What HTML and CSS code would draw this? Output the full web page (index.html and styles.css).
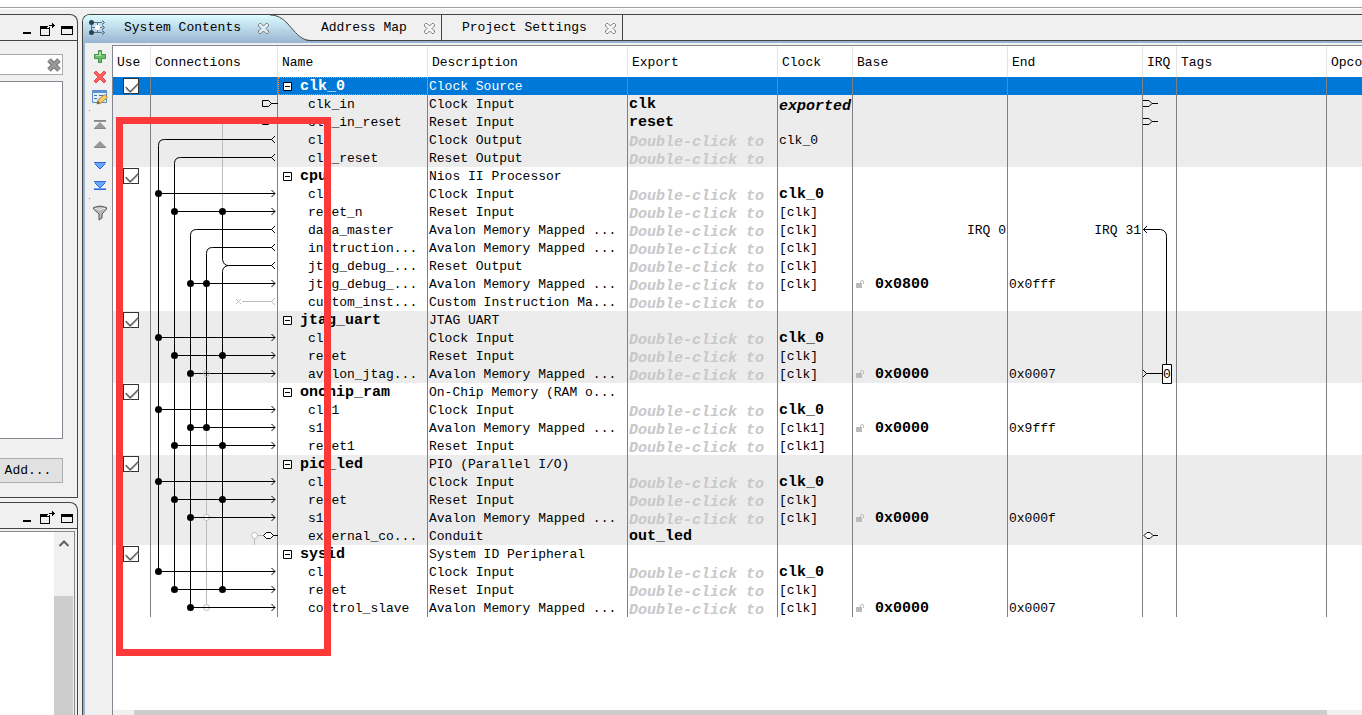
FILE: index.html
```
<!DOCTYPE html>
<html lang="en">
<head>
<meta charset="utf-8">
<title>System Contents</title>
<link rel="stylesheet" href="styles.css">
</head>
<body>
<svg class="defs" aria-hidden="true">
  <defs>
    <symbol id="win" viewBox="0 0 50 14">
      <path d="M0 9h8v2H0z"/>
      <path fill-rule="evenodd" d="M17 3h10v10H17zM18 6v6h8V6zM24 4h1V3h1V2h3V0h1v1h1v1h1v1h-1v1h-1v1h-1V3h-2v1h-1v1h-2z"/>
      <path fill-rule="evenodd" d="M38 3h12v9H38zM39 6v5h10V6z"/>
    </symbol>
    <symbol id="close" viewBox="0 0 11 11">
      <path d="M1.500 .5h1.500l2.500 2.500L8 .5h1.500l1 1V3L8 5.500 10.500 8v1.500l-1 1H8L5.500 8 3 10.500H1.500l-1-1V8L3 5.500.5 3V1.500z" fill="#fff" fill-opacity=".5" stroke="#777"/>
    </symbol>
    <symbol id="lock" viewBox="0 0 8 8">
      <path d="M0 3h6v5H0z" fill="#bbb"/><path d="M4.500 3V1.500q0-1 1.500-1t1.500 1V4" fill="none" stroke="#bbb"/>
    </symbol>
    <symbol id="minus" viewBox="0 0 9 9">
      <path d="M.5 .5h8v8h-8z" fill="#fff" stroke="#000"/><path d="M2 4.500h5" stroke="#000"/>
    </symbol>
    <g id="in"><path d="M271.500 -3.500l3.500 3.500-3.500 3.500"/></g>
    <g id="out"><path d="M275 -3.500l-3.500 3.500 3.500 3.500"/></g>
  </defs>
</svg>
<div class="topline"></div>
<div class="workspace">
  <aside class="side">
    <section class="pane">
      <header class="pane-head"><svg class="win"><use href="#win"/></svg></header>
      <div class="pane-body">
        <div class="search">
          <input type="text" aria-label="Search">
          <button class="clear" aria-label="Clear"><svg width="16" height="16" viewBox="0 0 16 16"><path d="M3 3l10 10M13 3L3 13" stroke="#777" stroke-width="5"/><path d="M3 3l10 10M13 3L3 13" stroke="#999" stroke-width="3"/></svg></button>
        </div>
        <div class="list"></div>
        <button class="add">Add...</button>
      </div>
    </section>
    <section class="pane pane-low">
      <header class="pane-head"><svg class="win"><use href="#win"/></svg></header>
      <div class="tree">
        <div class="vbar"><svg width="12" height="8" viewBox="0 0 12 8"><path d="M1.500 7L6 2.500 10.500 7" fill="none" stroke="#606060" stroke-width="2"/></svg><div class="vthumb"></div></div>
      </div>
    </section>
  </aside>
  <main class="editor">
    <nav class="tabs">
      <div class="tab active">
        <svg class="tab-bg" viewBox="0 0 228 28"><defs><linearGradient id="tabfill" x1="0" y1="0" x2="0" y2="1"><stop offset="0" stop-color="#dcfcff"/><stop offset="1" stop-color="#99b4d1"/></linearGradient></defs><path d="M0 28V7Q1 0 7 0H187C207 0 210 26 228 26V28z" fill="url(#tabfill)"/><path d="M187 0C207 0 210 25.500 228 25.500" fill="none" stroke="#444"/></svg>
        <svg class="tab-icon" width="17" height="16" viewBox="0 0 17 16"><path d="M3 2.500h10M3 7.500h10M3 12.500h10M2.500 3v10M8.500 3v10" stroke="#5a7386" fill="none"/><g fill="#2c4258"><circle cx="2.500" cy="2.500" r="2.500"/><circle cx="2.500" cy="12.500" r="2.500"/></g><path d="M13 .5l2.500 2-2.500 2M13 5.500l2.500 2-2.500 2M13 10.500l2.500 2-2.500 2" fill="none" stroke="#3b5166"/><circle cx="8.500" cy="7.500" r="2.500" fill="#fff"/></svg>
        <button class="tab-label">System Contents</button>
        <button class="x" aria-label="Close System Contents"><svg><use href="#close"/></svg></button>
      </div>
      <div class="tab second">
        <button class="tab-label">Address Map</button>
        <button class="x" aria-label="Close Address Map"><svg><use href="#close"/></svg></button>
      </div>
      <div class="tab third">
        <button class="tab-label">Project Settings</button>
        <button class="x" aria-label="Close Project Settings"><svg><use href="#close"/></svg></button>
      </div>
    </nav>
    <div class="content">
      <div class="tools">
        <button aria-label="Add"><svg viewBox="0 0 16 16"><path d="M6.500 1.500h3v4h4v4h-4v4h-3v-4h-4v-4h4z" fill="#6cc06c" stroke="#3c9146"/><path d="M7 3h2v4H4V6h3z" fill="#a9e6a4"/></svg></button>
        <button aria-label="Remove"><svg viewBox="0 0 16 16"><path d="M2 4l2-2 4 4 4-4 2 2-4 4 4 4-2 2-4-4-4 4-2-2 4-4z" fill="#ff6060" stroke="#e84a4a"/></svg></button>
        <button aria-label="Edit"><svg viewBox="0 0 16 16"><path d="M.5 1.500h14v12H.5z" fill="#e3f0fb" stroke="#5b8cc9"/><path d="M1 2h13v2H1z" fill="#5b93dc"/><path d="M2 6.500h3M2 9.500h3M7 6.500h5M7 9.500h2" stroke="#3f72b5"/><path d="M5 15l1-4 6.500-5.500 3 3L9 14z" fill="#f5ce69" stroke="#b5852c"/><path d="M5 15l1-3 2 2z" fill="#654"/></svg></button>
        <i class="sep"></i>
        <button aria-label="Move to top"><svg viewBox="0 0 16 16"><path d="M2 3h12v2H2zM8 5l6 6v1H2v-1z" fill="#999"/><path d="M2 3.500h12M2 11.500h12" stroke="#858585"/></svg></button>
        <button aria-label="Move up"><svg viewBox="0 0 16 16"><path d="M8 4l6 6v1H2v-1z" fill="#999"/><path d="M2 10.500h12" stroke="#858585"/></svg></button>
        <button aria-label="Move down"><svg viewBox="0 0 16 16"><path d="M2 5h12v1L8 12 2 6z" fill="#6aa5f8"/><path d="M2 5.500h12M3 7l5 5 5-5" stroke="#2a66d8" fill="none"/></svg></button>
        <button aria-label="Move to bottom"><svg viewBox="0 0 16 16"><path d="M2 4h12v1L8 11 2 5zM2 11h12v2H2z" fill="#6aa5f8"/><path d="M2 4.500h12M3 6l5 5 5-5M2 12.500h12" stroke="#2a66d8" fill="none"/></svg></button>
        <i class="sep"></i>
        <button aria-label="Filter"><svg viewBox="0 0 16 16"><path d="M1.500 2.500Q8-.5 14.500 2.500V4L10 9v4l-3 2V9L1.500 4z" fill="#bbb" stroke="#555"/><path d="M3 3.500q5 1.500 10 0" stroke="#eee" fill="none"/></svg></button>
      </div>
      <div class="grid">
        <table>
          <colgroup><col class="c-use"><col class="c-con"><col class="c-name"><col class="c-desc"><col class="c-exp"><col class="c-clk"><col class="c-base"><col class="c-end"><col class="c-irq"><col class="c-tags"><col class="c-op"></colgroup>
          <thead><tr><th>Use</th><th>Connections</th><th>Name</th><th>Description</th><th>Export</th><th>Clock</th><th>Base</th><th>End</th><th>IRQ</th><th>Tags</th><th>Opcode Name</th></tr></thead>
          <tbody class="selected">
            <tr><td class="use"><input type="checkbox" checked aria-label="Use clk_0"></td>
              <td class="wires"><svg width="127" height="540" viewBox="151 77 127 540" fill="none" stroke="#000">
                <g stroke="#bbb">
                  <path d="M222.500 121V211M206.500 427V607M242 301.500H272M236 299l5 5M241 299l-5 5M254.500 538V545M257 535.500H264"/>
                  <use href="#out" y="301.500"/>
                </g>
                <path d="M262.500 100.500h6l3 3-3 3h-6zM271 103.500h7M262.500 118.500h6l3 3-3 3h-6zM271 121.500h7"/>
                <path d="M272 139.500H164.500Q158.500 139.500 158.500 145.500V571M272 157.500H180.500Q174.500 157.500 174.500 163.500V589M272 229.500H196.500Q190.500 229.500 190.500 235.500V607M272 247.500H212.500Q206.500 247.500 206.500 253.500V427M222.500 211V259.500Q223.500 265.500 228.500 265.500H272M228.500 265.500Q222.500 266.500 222.500 271.500V589"/>
                <path d="M158 193.500H275M174 211.500H275M190 283.500H275M158 337.500H275M174 355.500H275M190 373.500H275M158 409.500H275M190 427.500H275M174 445.500H275M158 481.500H275M174 499.500H275M190 517.500H275M158 571.500H275M174 589.500H275M190 607.500H275"/>
                <g stroke="#bbb">
                  <circle cx="206.500" cy="373.500" r="3"/>
                  <circle cx="254.500" cy="535.500" r="3" fill="#fff"/><circle cx="206.500" cy="517.500" r="3" fill="#fff"/><circle cx="206.500" cy="607.500" r="3" fill="#fff"/>
                </g>
                <path d="M203 517.500h7M203 607.500h7"/>
                <use href="#out" y="139.500"/><use href="#out" y="157.500"/><use href="#out" y="229.500"/><use href="#out" y="247.500"/><use href="#out" y="265.500"/>
                <use href="#in" y="193.500"/><use href="#in" y="211.500"/><use href="#in" y="283.500"/><use href="#in" y="337.500"/><use href="#in" y="355.500"/><use href="#in" y="373.500"/><use href="#in" y="409.500"/><use href="#in" y="427.500"/><use href="#in" y="445.500"/><use href="#in" y="481.500"/><use href="#in" y="499.500"/><use href="#in" y="517.500"/><use href="#in" y="571.500"/><use href="#in" y="589.500"/><use href="#in" y="607.500"/>
                <path d="M263.500 535.500l3-3h4l3 3-3 3h-4z" fill="#fff"/><path d="M273 535.500h5"/>
                <g fill="#000" stroke="none">
                  <circle cx="158.500" cy="193.500" r="3.500"/><circle cx="158.500" cy="337.500" r="3.500"/><circle cx="158.500" cy="409.500" r="3.500"/><circle cx="158.500" cy="481.500" r="3.500"/><circle cx="158.500" cy="571.500" r="3.500"/>
                  <circle cx="174.500" cy="211.500" r="3.500"/><circle cx="174.500" cy="355.500" r="3.500"/><circle cx="174.500" cy="445.500" r="3.500"/><circle cx="174.500" cy="499.500" r="3.500"/><circle cx="174.500" cy="589.500" r="3.500"/>
                  <circle cx="222.500" cy="211.500" r="3.500"/><circle cx="222.500" cy="355.500" r="3.500"/><circle cx="222.500" cy="445.500" r="3.500"/><circle cx="222.500" cy="499.500" r="3.500"/><circle cx="222.500" cy="589.500" r="3.500"/>
                  <circle cx="190.500" cy="283.500" r="3.500"/><circle cx="190.500" cy="373.500" r="3.500"/><circle cx="190.500" cy="427.500" r="3.500"/><circle cx="190.500" cy="517.500" r="3.500"/><circle cx="190.500" cy="607.500" r="3.500"/>
                  <circle cx="206.500" cy="283.500" r="3.500"/><circle cx="206.500" cy="427.500" r="3.500"/>
                </g>
              </svg></td>
              <td class="mod focus"><svg><use href="#minus"/></svg>clk_0</td><td>Clock Source</td><td></td><td></td><td></td><td></td>
              <td class="wires"><svg width="34" height="540" viewBox="1143 77 34 540" fill="none" stroke="#000">
                <path d="M1143 100.500h6l3 3-3 3h-6M1152 103.500h6M1143 118.500h6l3 3-3 3h-6M1152 121.500h6"/>
                <path d="M1147 226l-3.500 3.500 3.500 3.500M1143 229.500H1160.500Q1166.500 230.500 1166.500 236.500V364M1143 370l3.500 3.500-3.500 3.500M1146 373.500H1162"/>
                <path d="M1162.500 364.500h9v19h-9z" fill="#fff"/>
                <text x="1163" y="378" class="irqno">0</text>
                <path d="M1144 535.500l3-3h3l3 3-3 3h-3z" fill="#fff"/><path d="M1153 535.500h5"/>
              </svg></td><td></td><td></td></tr>
          </tbody>
          <tbody class="shade">
            <tr><td></td><td></td><td class="port">clk_in</td><td>Clock Input</td><td class="strong">clk</td><td class="hint dark">exported</td><td></td><td></td><td></td><td></td><td></td></tr>
            <tr><td></td><td></td><td class="port">clk_in_reset</td><td>Reset Input</td><td class="strong">reset</td><td></td><td></td><td></td><td></td><td></td><td></td></tr>
            <tr><td></td><td></td><td class="port">clk</td><td>Clock Output</td><td class="hint">Double-click to</td><td>clk_0</td><td></td><td></td><td></td><td></td><td></td></tr>
            <tr><td></td><td></td><td class="port">clk_reset</td><td>Reset Output</td><td class="hint">Double-click to</td><td></td><td></td><td></td><td></td><td></td><td></td></tr>
          </tbody>
          <tbody>
            <tr><td class="use"><input type="checkbox" checked aria-label="Use cpu"></td><td></td><td class="mod"><svg><use href="#minus"/></svg>cpu</td><td>Nios II Processor</td><td></td><td></td><td></td><td></td><td></td><td></td><td></td></tr>
            <tr><td></td><td></td><td class="port">clk</td><td>Clock Input</td><td class="hint">Double-click to</td><td class="strong">clk_0</td><td></td><td></td><td></td><td></td><td></td></tr>
            <tr><td></td><td></td><td class="port">reset_n</td><td>Reset Input</td><td class="hint">Double-click to</td><td>[clk]</td><td></td><td></td><td></td><td></td><td></td></tr>
            <tr><td></td><td></td><td class="port">data_master</td><td>Avalon Memory Mapped ...</td><td class="hint">Double-click to</td><td>[clk]</td><td class="irq">IRQ 0</td><td class="irq">IRQ 31</td><td></td><td></td><td></td></tr>
            <tr><td></td><td></td><td class="port">instruction...</td><td>Avalon Memory Mapped ...</td><td class="hint">Double-click to</td><td>[clk]</td><td></td><td></td><td></td><td></td><td></td></tr>
            <tr><td></td><td></td><td class="port">jtag_debug_...</td><td>Reset Output</td><td class="hint">Double-click to</td><td>[clk]</td><td></td><td></td><td></td><td></td><td></td></tr>
            <tr><td></td><td></td><td class="port">jtag_debug_...</td><td>Avalon Memory Mapped ...</td><td class="hint">Double-click to</td><td>[clk]</td><td class="strong base"><svg><use href="#lock"/></svg>0x0800</td><td>0x0fff</td><td></td><td></td><td></td></tr>
            <tr><td></td><td></td><td class="port">custom_inst...</td><td>Custom Instruction Ma...</td><td class="hint">Double-click to</td><td></td><td></td><td></td><td></td><td></td><td></td></tr>
          </tbody>
          <tbody class="shade">
            <tr><td class="use"><input type="checkbox" checked aria-label="Use jtag_uart"></td><td></td><td class="mod"><svg><use href="#minus"/></svg>jtag_uart</td><td>JTAG UART</td><td></td><td></td><td></td><td></td><td></td><td></td><td></td></tr>
            <tr><td></td><td></td><td class="port">clk</td><td>Clock Input</td><td class="hint">Double-click to</td><td class="strong">clk_0</td><td></td><td></td><td></td><td></td><td></td></tr>
            <tr><td></td><td></td><td class="port">reset</td><td>Reset Input</td><td class="hint">Double-click to</td><td>[clk]</td><td></td><td></td><td></td><td></td><td></td></tr>
            <tr><td></td><td></td><td class="port">avalon_jtag...</td><td>Avalon Memory Mapped ...</td><td class="hint">Double-click to</td><td>[clk]</td><td class="strong base"><svg><use href="#lock"/></svg>0x0000</td><td>0x0007</td><td></td><td></td><td></td></tr>
          </tbody>
          <tbody>
            <tr><td class="use"><input type="checkbox" checked aria-label="Use onchip_ram"></td><td></td><td class="mod"><svg><use href="#minus"/></svg>onchip_ram</td><td>On-Chip Memory (RAM o...</td><td></td><td></td><td></td><td></td><td></td><td></td><td></td></tr>
            <tr><td></td><td></td><td class="port">clk1</td><td>Clock Input</td><td class="hint">Double-click to</td><td class="strong">clk_0</td><td></td><td></td><td></td><td></td><td></td></tr>
            <tr><td></td><td></td><td class="port">s1</td><td>Avalon Memory Mapped ...</td><td class="hint">Double-click to</td><td>[clk1]</td><td class="strong base"><svg><use href="#lock"/></svg>0x0000</td><td>0x9fff</td><td></td><td></td><td></td></tr>
            <tr><td></td><td></td><td class="port">reset1</td><td>Reset Input</td><td class="hint">Double-click to</td><td>[clk1]</td><td></td><td></td><td></td><td></td><td></td></tr>
          </tbody>
          <tbody class="shade">
            <tr><td class="use"><input type="checkbox" checked aria-label="Use pio_led"></td><td></td><td class="mod"><svg><use href="#minus"/></svg>pio_led</td><td>PIO (Parallel I/O)</td><td></td><td></td><td></td><td></td><td></td><td></td><td></td></tr>
            <tr><td></td><td></td><td class="port">clk</td><td>Clock Input</td><td class="hint">Double-click to</td><td class="strong">clk_0</td><td></td><td></td><td></td><td></td><td></td></tr>
            <tr><td></td><td></td><td class="port">reset</td><td>Reset Input</td><td class="hint">Double-click to</td><td>[clk]</td><td></td><td></td><td></td><td></td><td></td></tr>
            <tr><td></td><td></td><td class="port">s1</td><td>Avalon Memory Mapped ...</td><td class="hint">Double-click to</td><td>[clk]</td><td class="strong base"><svg><use href="#lock"/></svg>0x0000</td><td>0x000f</td><td></td><td></td><td></td></tr>
            <tr><td></td><td></td><td class="port">external_co...</td><td>Conduit</td><td class="strong">out_led</td><td></td><td></td><td></td><td></td><td></td><td></td></tr>
          </tbody>
          <tbody>
            <tr><td class="use"><input type="checkbox" checked aria-label="Use sysid"></td><td></td><td class="mod"><svg><use href="#minus"/></svg>sysid</td><td>System ID Peripheral</td><td></td><td></td><td></td><td></td><td></td><td></td><td></td></tr>
            <tr><td></td><td></td><td class="port">clk</td><td>Clock Input</td><td class="hint">Double-click to</td><td class="strong">clk_0</td><td></td><td></td><td></td><td></td><td></td></tr>
            <tr><td></td><td></td><td class="port">reset</td><td>Reset Input</td><td class="hint">Double-click to</td><td>[clk]</td><td></td><td></td><td></td><td></td><td></td></tr>
            <tr><td></td><td></td><td class="port">control_slave</td><td>Avalon Memory Mapped ...</td><td class="hint">Double-click to</td><td>[clk]</td><td class="strong base"><svg><use href="#lock"/></svg>0x0000</td><td>0x0007</td><td></td><td></td><td></td></tr>
          </tbody>
        </table>
        <div class="marker"></div>
        <div class="hbar"><div class="hthumb"></div></div>
      </div>
    </div>
  </main>
</div>
</body>
</html>
```
FILE: styles.css
```
* { box-sizing: border-box; }
body {
  margin: 0;
  height: 100vh;
  display: flex;
  flex-direction: column;
  overflow: hidden;
  background: #f0f0f0;
  color: #000;
  font: 13px/18px "Liberation Mono", monospace;
}
button {
  padding: 0;
  border: 0;
  background: none;
  font: inherit;
  color: inherit;
}
svg { display: block; flex: none; }
.defs { position: absolute; width: 0; height: 0; }
.topline {
  flex: none;
  height: 8px;
  margin-bottom: 6px;
  background: #fff;
  border-bottom: 1px solid #a0a0a0;
  box-shadow: 0 1px #fff;
}
.workspace { flex: 1; display: flex; gap: 4px; min-height: 0; }

.side { flex: none; width: 78px; display: flex; flex-direction: column; gap: 4px; }
.pane {
  border: 1px solid #444;
  border-left: 0;
  border-top-right-radius: 8px;
}
.pane-head {
  height: 26px;
  padding: 8px 4px 0 0;
  display: flex;
  justify-content: flex-end;
  border-bottom: 1px solid #444;
}
.win { width: 50px; height: 14px; }
.pane-body {
  padding: 13px 14px 14px 0;
  display: flex;
  flex-direction: column;
  align-items: stretch;
}
.search {
  display: flex;
  align-items: center;
  height: 21px;
  background: #fff;
  border: 1px solid #aaa;
  border-left: 0;
}
.search input {
  flex: 1;
  min-width: 0;
  border: 0;
  outline: 0;
  background: none;
}
.list {
  height: 358px;
  margin: 6px 0 19px;
  background: #fff;
  border: 1px solid #828790;
  border-left: 0;
}
.add {
  height: 25px;
  padding-right: 6px;
  background: #e1e1e1;
  border: 1px solid #adadad;
  border-left: 0;
}
.pane-low { flex: 1; border-bottom: 0; display: flex; flex-direction: column; min-height: 0; }
.tree {
  flex: 1;
  margin: 2px 2px 0 0;
  display: flex;
  justify-content: flex-end;
  background: #fff;
  border: 1px solid #828790;
  border-width: 1px 1px 0 0;
}
.vbar {
  width: 20px;
  padding: 7px 1px 0 0;
  display: flex;
  flex-direction: column;
  align-items: center;
  gap: 49px;
  background: #f0f0f0;
}
.vthumb { flex: 1; width: 100%; background: #cdcdcd; }

.editor {
  flex: 1;
  min-width: 0;
  display: flex;
  flex-direction: column;
  border: 1px solid #444;
  border-width: 1px 0 0 1px;
  border-top-left-radius: 8px;
}
.tabs {
  flex: none;
  height: 28px;
  display: flex;
  background: linear-gradient(#f0f0f0 25px, #444 25px, #444 26px, #99b4d1 26px);
  border-top-left-radius: 7px;
}
.tab { display: flex; align-items: center; height: 26px; }
.tab-label, .tab-icon { position: relative; }
.tab-label { text-align: left; }
.x { position: relative; height: 13px; }
.x svg { width: 11px; height: 11px; }
.active { position: relative; width: 218px; padding-left: 6px; }
.active .tab-label { width: 134px; margin-left: 18px; }
.tab-bg { position: absolute; left: 0; top: 0; width: 228px; height: 28px; }
.second { width: 141px; padding-left: 20px; border-right: 1px solid #444; }
.second .tab-label { width: 103px; }
.third { width: 181px; padding-left: 20px; border-right: 1px solid #444; }
.third .tab-label { width: 143px; }

.content {
  flex: 1;
  min-height: 0;
  display: flex;
  border-left: 2px solid #99b4d1;
  padding-top: 2px;
}
.tools {
  flex: none;
  width: 27px;
  padding: 4px 0 0 2px;
  display: flex;
  flex-direction: column;
  align-items: center;
  gap: 4px;
}
.tools svg { width: 16px; height: 16px; }
.sep { width: 1px; height: 1px; margin: 1px 20px 2px 0; background: #888; }
.grid {
  flex: 1;
  min-width: 0;
  position: relative;
  display: flex;
  flex-direction: column;
  justify-content: space-between;
  overflow: hidden;
  background: #fff;
  border: 1px solid #828790;
  border-width: 1px 0 0 1px;
}
table {
  table-layout: fixed;
  width: 1364px;
  border-collapse: separate;
  border-spacing: 0;
}
.c-use { width: 38px; }
.c-con { width: 127px; }
.c-name { width: 150px; }
.c-desc { width: 200px; }
.c-exp { width: 150px; }
.c-clk { width: 75px; }
.c-base { width: 155px; }
.c-end { width: 135px; }
.c-irq { width: 34px; }
.c-tags { width: 150px; }
.c-op { width: 150px; }
th {
  height: 31px;
  padding: 2px 0 0 4px;
  text-align: left;
  font-weight: normal;
  white-space: nowrap;
  border-right: 1px solid #e5e5e5;
}
td {
  height: 18px;
  padding: 2px 0 0 1px;
  line-height: 16px;
  white-space: nowrap;
  border-right: 1px solid #808080;
}
td:last-child { border-right: 0; }
.shade td { background: #ececec; }
.selected td { background: #0078d7; color: #fff; }
.use { padding: 0 0 0 10px; }
td input {
  appearance: none;
  display: block;
  width: 16px;
  height: 16px;
  margin: 0;
  background: #fff;
  border: 1px solid #333;
}
td input:checked::after {
  content: "";
  display: block;
  width: 11px;
  height: 6px;
  margin: 3px 2px;
  border: solid #444;
  border-width: 0 0 1px 1px;
  box-shadow: -1px 1px #bbb;
  transform: rotate(-45deg);
}
.wires { position: relative; }
.wires svg { position: absolute; left: 0; top: 0; pointer-events: none; }
.irqno { fill: #000; stroke: none; }
.mod, .strong { font-size: 15px; font-weight: bold; }
.mod { padding-left: 22px; position: relative; }
.mod svg { position: absolute; left: 5px; top: 5px; width: 9px; height: 9px; }
.focus { outline: 1px dotted #ff8c32; outline-offset: -1px; }
.port { padding-left: 30px; }
.hint {
  padding: 6px 0 0 1px;
  font-size: 15px;
  line-height: 12px;
  font-weight: bold;
  font-style: italic;
  color: #c8c8c8;
}
.dark { color: #000; }
.irq { padding-right: 1px; text-align: right; }
.base { position: relative; padding-left: 22px; }
.base svg { position: absolute; left: 3px; top: 5px; width: 8px; height: 8px; }
.marker {
  position: absolute;
  left: 3px;
  top: 71px;
  width: 215px;
  height: 539px;
  border: 7px solid #fd3838;
}
.hbar { height: 5px; padding: 0 35px 0 21px; background: #f0f0f0; }
.hthumb { height: 5px; background: #cdcdcd; }
```
